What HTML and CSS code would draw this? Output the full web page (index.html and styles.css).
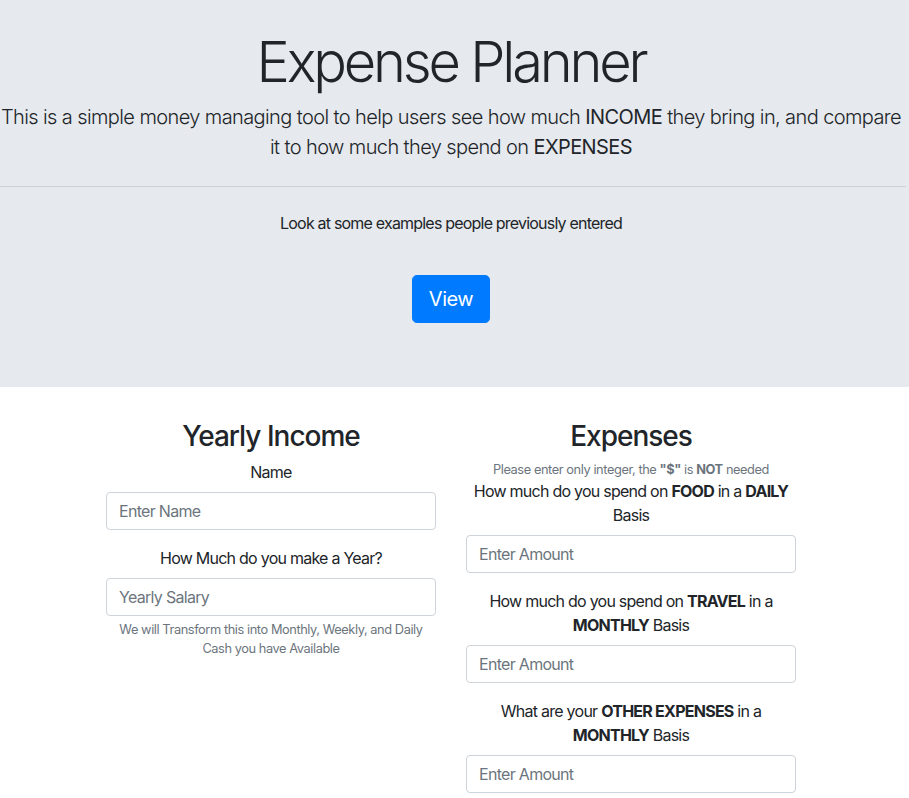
FILE: index.html
```html
<!DOCTYPE html>
<html lang="en">
<head>
<meta charset="utf-8">
<title>Expense Planner</title>
<link rel="stylesheet" href="styles.css">
</head>
<body>
<header class="jumbotron">
  <div class="jumbo-inner">
    <h1 class="display">Expense Planner</h1>
    <p class="lead"><span class="line">This is a simple money managing tool to help users see how much <b>INCOME</b> they bring in, and compare</span><br><span class="line">it to how much they spend on <b>EXPENSES</b></span></p>
    <hr class="divider">
    <p class="examples">Look at some examples people previously entered</p>
    <div class="btn-wrap"><button class="btn-view" type="button">View</button></div>
  </div>
</header>
<main class="main">
  <div class="container">
    <section class="col">
      <h3 class="col-title">Yearly Income</h3>
      <div class="form-group">
        <label class="label" for="name">Name</label>
        <input class="input" id="name" type="text" placeholder="Enter Name">
      </div>
      <div class="form-group">
        <label class="label" for="salary">How Much do you make a Year?</label>
        <input class="input" id="salary" type="text" placeholder="Yearly Salary">
        <small class="help">We will Transform this into Monthly, Weekly, and Daily<br>Cash you have Available</small>
      </div>
    </section>
    <section class="col">
      <h3 class="col-title">Expenses</h3>
      <small class="note">Please enter only integer, the <b>"$"</b> is <b>NOT</b> needed</small>
      <div class="form-group">
        <label class="label" for="food">How much do you spend on <b>FOOD</b> in a <b>DAILY</b><br>Basis</label>
        <input class="input" id="food" type="text" placeholder="Enter Amount">
      </div>
      <div class="form-group">
        <label class="label" for="travel">How much do you spend on <b>TRAVEL</b> in a<br><b>MONTHLY</b> Basis</label>
        <input class="input" id="travel" type="text" placeholder="Enter Amount">
      </div>
      <div class="form-group">
        <label class="label" for="other">What are your <b>OTHER EXPENSES</b> in a<br><b>MONTHLY</b> Basis</label>
        <input class="input" id="other" type="text" placeholder="Enter Amount">
      </div>
    </section>
  </div>
</main>
</body>
</html>
```

FILE: styles.css
```css
* { box-sizing: border-box; }
html, body { margin: 0; padding: 0; }
body {
  font-family: Inter, "Noto Sans", "Liberation Sans", sans-serif;
  font-size: 16px;
  line-height: 1.5;
  color: #212529;
  background: #fff;
  overflow: hidden;
}
.jumbotron {
  background: #e6e9ed;
  padding: 29px 7px 64px 0;
}
.jumbo-inner { text-align: center; }
.display {
  margin: 0 0 6px;
  font-size: 56px;
  font-weight: 300;
  line-height: 1.2;
  letter-spacing: -3.2px;
}
.lead {
  margin: 0 0 16px;
  font-size: 20px;
  font-weight: 300;
  line-height: 30px;
  letter-spacing: -0.6px;
}
.lead b { font-weight: 400; }
.line { white-space: nowrap; }
.divider {
  margin: 24px -4px 24px 0;
  border: 0;
  border-top: 1px solid rgba(0,0,0,.1);
}
.examples { margin: 0 0 16px; letter-spacing: -0.8px; }
.btn-wrap { margin-top: 40px; }
.btn-view {
  font-family: inherit;
  font-size: 20px;
  line-height: 30px;
  padding: 8px 16px;
  border: 1px solid #007bff;
  background: #007bff;
  color: #fff;
  border-radius: 4.8px;
  font-weight: 400;
  letter-spacing: -0.5px;
}
.main { padding: 33px 7px 0 0; }
.container {
  width: 720px;
  margin: 0 auto;
  display: grid;
  grid-template-columns: 1fr 1fr;
  gap: 30px;
  padding: 0 15px;
}
.col { text-align: center; display: flex; flex-direction: column; }
.col-title {
  margin: 0 0 6px;
  font-size: 28px;
  font-weight: 500;
  line-height: 1.2;
  letter-spacing: -1px;
}
.form-group { margin-bottom: 16px; display: flex; flex-direction: column; }
.label { display: block; margin-bottom: 8px; letter-spacing: -0.75px; }
.label b { font-weight: 700; }
.input {
  display: block;
  width: 100%;
  height: 38px;
  padding: 6px 12px;
  font-family: inherit;
  font-size: 16px;
  line-height: 24px;
  color: #495057;
  background: #fff;
  border: 1px solid #ced4da;
  border-radius: 4px;
  text-align: left;
  letter-spacing: -0.7px;
}
.input::placeholder { color: #6c757d; opacity: 1; }
.help, .note {
  display: block;
  font-size: 12.8px;
  line-height: 19.2px;
  color: #6c757d;
  letter-spacing: -0.42px;
}
.help { margin-top: 4px; }
.note b { font-weight: 700; }
```
